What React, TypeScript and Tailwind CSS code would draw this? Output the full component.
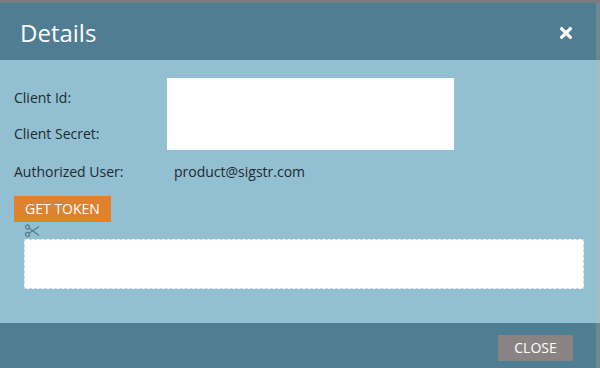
import { FaTimes } from 'react-icons/fa';

function Scissors() {
    return (
        <svg width="16" height="14" viewBox="0 0 16 14" fill="none" stroke="#5b7f90" strokeWidth="1.3">
            <circle cx="3.5" cy="3" r="2" />
            <circle cx="3.5" cy="10.5" r="2" />
            <path d="M5.2 4.2 L15 11.5 M5.2 9.3 L15 2.5" />
        </svg>
    );
}

export default function App() {
    return (
        <div
            className="flex h-[368px] w-[600px] flex-col bg-[#7b7b82] pt-[3px]"
            style={{ fontFamily: '"Open Sans", "Noto Sans", sans-serif' }}
        >
            <div className="flex h-[57px] items-center justify-between border-r-4 border-[#6f8792] bg-[#4f7d92] pl-5 pr-[21px] pt-[3px]">
                <h1 className="text-[24px] leading-none text-white">Details</h1>
                <FaTimes className="text-[18px] text-white" />
            </div>

            <div className="flex flex-1 flex-col border-r-4 border-[#a4bcc6] bg-[#92bfd1] px-[14px] pt-[18px] text-[14px] leading-[20px] text-[#1d2a30]">
                <div className="flex">
                    <div className="flex w-[153px] flex-col">
                        <span className="mt-[10px]">Client Id:</span>
                        <span className="mt-[16px]">Client Secret:</span>
                    </div>
                    <div className="h-[72px] w-[287px] bg-white" />
                </div>
                <div className="mt-[12px] flex">
                    <span className="w-[160px]">Authorized User:</span>
                    <span>product@sigstr.com</span>
                </div>
                <button className="mt-[14px] h-[26px] w-[97px] bg-[#e0812f] text-[14px] text-white">
                    GET TOKEN
                </button>
                <div className="ml-[10px] mt-[2px] h-[14px]">
                    <Scissors />
                </div>
                <div className="ml-[10px] mt-[1px] h-[50px] w-[560px] border border-dashed border-[#c9d6dc] bg-white" />
            </div>

            <div className="flex h-[45px] items-center justify-end border-r-4 border-[#6f8792] bg-[#4f7d92] pr-[23px] pt-[4px]">
                <button className="h-[26px] w-[75px] bg-[#898384] text-[14px] text-white">CLOSE</button>
            </div>
        </div>
    );
}
